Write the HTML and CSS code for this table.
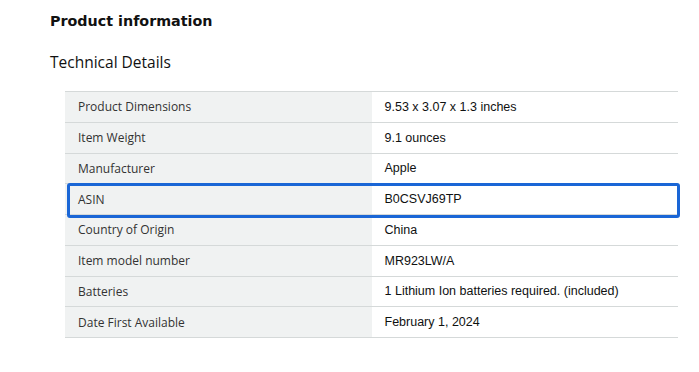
FILE: index.html
```html
<!DOCTYPE html>
<html lang="en">
  <head>
    <meta charset="UTF-8" />
    <meta name="viewport" content="width=device-width, initial-scale=1.0" />
    <title>Product information</title>
    <link rel="stylesheet" href="styles.css">
  </head>
  <body>
    <div class="container">
      <h1>Product information</h1>
      <h2>Technical Details</h2>

      <div class="details">
        <div class="row">
          <div class="label">Product Dimensions</div>
          <div class="value">9.53 x 3.07 x 1.3 inches</div>
        </div>
        <div class="row">
          <div class="label">Item Weight</div>
          <div class="value">9.1 ounces</div>
        </div>
        <div class="row">
          <div class="label">Manufacturer</div>
          <div class="value">Apple</div>
        </div>
        <div class="row">
          <div class="label">ASIN</div>
          <div class="value">B0CSVJ69TP</div>
        </div>
        <div class="row">
          <div class="label">Country of Origin</div>
          <div class="value">China</div>
        </div>
        <div class="row">
          <div class="label">Item model number</div>
          <div class="value">MR923LW/A</div>
        </div>
        <div class="row">
          <div class="label">Batteries</div>
          <div class="value">1 Lithium Ion batteries required. (included)</div>
        </div>
        <div class="row">
          <div class="label">Date First Available</div>
          <div class="value">February 1, 2024</div>
        </div>

        <!-- highlight over the ASIN row -->
        <div class="highlight"></div>
      </div>
    </div>
  </body>
</html>
```

FILE: styles.css
```css
body {
  margin: 0;
  background: #fff;
  color: #0f1111;
}
.container {
  padding: 11px 0 0 50px;
}
h1 {
  margin: 0;
  font-family: "DejaVu Sans", sans-serif;
  font-size: 14.3px;
  font-weight: bold;
  line-height: 20px;
  color: #111;
}
h2 {
  margin: 20px 0 0;
  font-family: "Open Sans", sans-serif;
  font-size: 15.5px;
  font-weight: normal;
  line-height: 22px;
  color: #111;
}
.details {
  position: relative;
  width: 613px;
  margin: 18px 0 0 15px;
  border-top: 1px solid #d5d9d9;
}
.row {
  display: flex;
  box-sizing: border-box;
  height: 30.75px;
  border-bottom: 1px solid #d5d9d9;
  align-items: stretch;
}
.label,
.value {
  display: flex;
  align-items: center;
  box-sizing: border-box;
  width: 50%;
  padding: 0 13px;
}
.label {
  background: #f0f2f2;
  font-family: "Open Sans", sans-serif;
  font-size: 12px;
  color: #333;
}
.value {
  font-family: "Liberation Sans", Arial, sans-serif;
  font-size: 12.5px;
  color: #0f1111;
}
.highlight {
  position: absolute;
  left: 2px;
  top: 91px;
  width: 613px;
  height: 35px;
  box-sizing: border-box;
  border: 3px solid #1a66d6;
  border-radius: 3px;
}
```
